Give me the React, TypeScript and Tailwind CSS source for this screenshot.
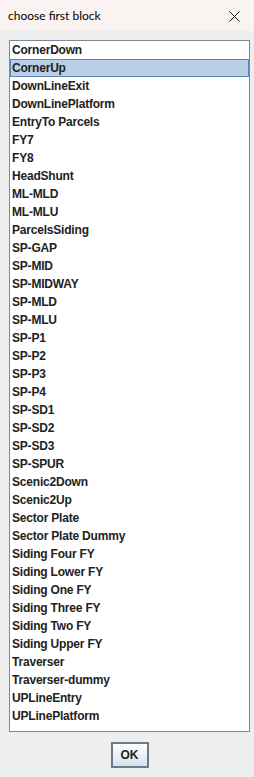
import React from "react";

const items = [
  "CornerDown",
  "CornerUp",
  "DownLineExit",
  "DownLinePlatform",
  "EntryTo Parcels",
  "FY7",
  "FY8",
  "HeadShunt",
  "ML-MLD",
  "ML-MLU",
  "ParcelsSiding",
  "SP-GAP",
  "SP-MID",
  "SP-MIDWAY",
  "SP-MLD",
  "SP-MLU",
  "SP-P1",
  "SP-P2",
  "SP-P3",
  "SP-P4",
  "SP-SD1",
  "SP-SD2",
  "SP-SD3",
  "SP-SPUR",
  "Scenic2Down",
  "Scenic2Up",
  "Sector Plate",
  "Sector Plate Dummy",
  "Siding Four FY",
  "Siding Lower FY",
  "Siding One FY",
  "Siding Three FY",
  "Siding Two FY",
  "Siding Upper FY",
  "Traverser",
  "Traverser-dummy",
  "UPLineEntry",
  "UPLinePlatform",
];

export default function App() {
  return (
    <div className="w-[254px] h-[777px] flex flex-col bg-[#eeeeee] overflow-hidden">
      <div className="h-[31px] shrink-0 bg-[#f9f3f2] flex items-center justify-between pl-[8px] pr-[14px]">
        <span
          className="text-[12px] text-black"
          style={{ fontFamily: 'Lato, "Noto Sans", sans-serif' }}
        >
          choose first block
        </span>
        <svg width="11" height="11" viewBox="0 0 11 11" className="mt-[1px]">
          <path d="M0.5 0.5 L10.5 10.5 M10.5 0.5 L0.5 10.5" stroke="#111" strokeWidth="1" fill="none" />
        </svg>
      </div>
      <div className="flex flex-col pt-[9px] pl-[9px] pr-[4px]">
        <div className="h-[692px] border border-[#7a8a99] bg-white flex flex-col">
          {items.map((it) => (
            <div
              key={it}
              className={
                it === "CornerUp"
                  ? "h-[18px] flex items-center pl-[1px] text-[12px] font-bold tracking-[-0.2px] text-[#222] bg-[#b8cfe5] border border-[#6382bf]"
                  : "h-[18px] flex items-center pl-[2px] text-[12px] font-bold tracking-[-0.2px] text-[#222]"
              }
              style={{ fontFamily: '"Liberation Sans", Arial, sans-serif' }}
            >
              {it}
            </div>
          ))}
        </div>
        <div className="flex justify-center pt-[10px]">
          <button
            className="w-[38px] h-[26px] border-2 border-[#6d7a88] bg-gradient-to-b from-[#ffffff] to-[#d6e2ef] text-[12px] font-bold text-[#222] flex items-center justify-center"
            style={{ fontFamily: '"Liberation Sans", Arial, sans-serif' }}
          >
            OK
          </button>
        </div>
      </div>
    </div>
  );
}
